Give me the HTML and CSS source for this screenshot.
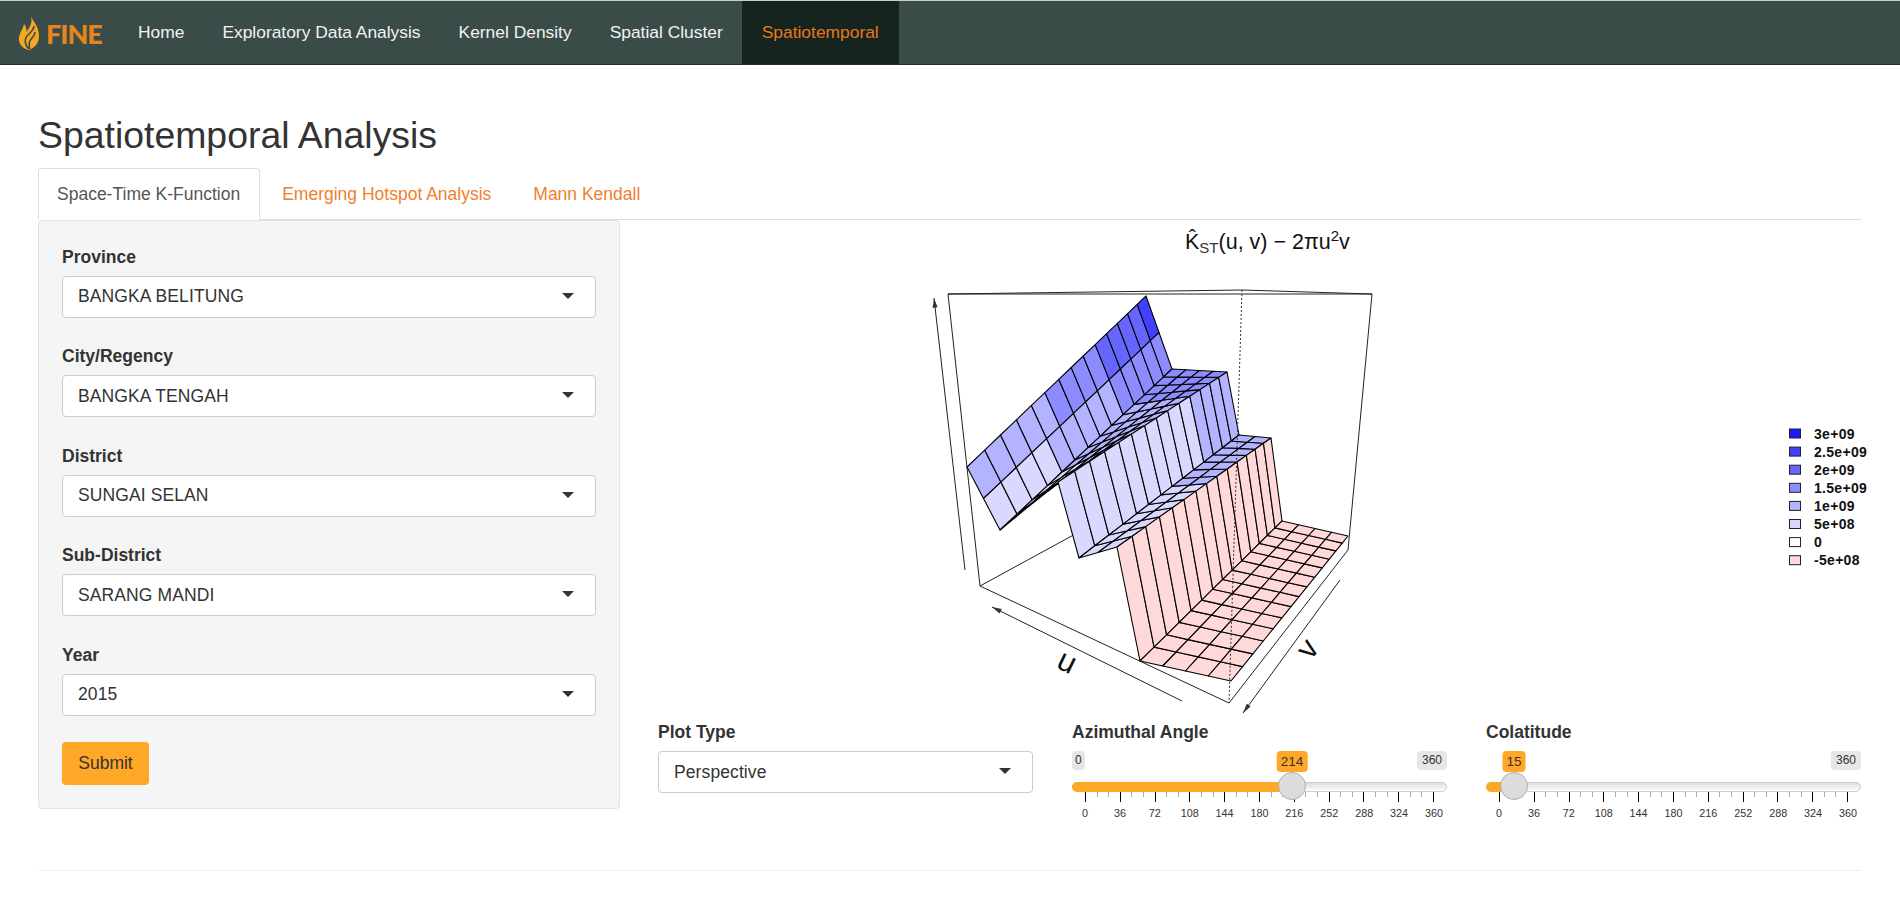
FILE: index.html
```html
<!DOCTYPE html>
<html lang="en">
<head>
<meta charset="UTF-8">
<meta name="viewport" content="width=device-width, initial-scale=1.0">
<title>FINE - Spatiotemporal Analysis</title>
<link rel="stylesheet" href="styles.css">
</head>
<body>
<nav class="navbar">
    <a class="brand" href="#">
        <svg class="brand-flame" viewBox="0 0 22 34" width="22" height="34">
            <path fill="#f5a623" d="M13 0C15 6 21 10 21 20C21 28 16 32 11 34C5 33 0 28 1 21C2 16 5 13 6 8C8 10 9 13 8 16C11 13 15 7 13 0Z"/>
            <path fill="none" stroke="#3a4c48" stroke-width="1.6" d="M11 33C6 28 6 22 11 18C14 15 16 13 16 10M12 33C10 28 11 25 14 22C16 20 17 18 17 16"/>
        </svg>
        <span class="brand-text">FINE</span>
    </a>
    <ul class="nav-links">
        <li><a href="#">Home</a></li>
        <li><a href="#">Exploratory Data Analysis</a></li>
        <li><a href="#">Kernel Density</a></li>
        <li><a href="#">Spatial Cluster</a></li>
        <li class="active"><a href="#">Spatiotemporal</a></li>
    </ul>
</nav>

<div class="container">
    <h1>Spatiotemporal Analysis</h1>
    <ul class="tabs">
        <li class="active"><a href="#">Space-Time K-Function</a></li>
        <li><a href="#">Emerging Hotspot Analysis</a></li>
        <li><a href="#">Mann Kendall</a></li>
    </ul>

    <div class="layout">
        <form class="sidebar">
            <div class="form-group">
                <label>Province</label>
                <div class="select">BANGKA BELITUNG</div>
            </div>
            <div class="form-group">
                <label>City/Regency</label>
                <div class="select">BANGKA TENGAH</div>
            </div>
            <div class="form-group">
                <label>District</label>
                <div class="select">SUNGAI SELAN</div>
            </div>
            <div class="form-group">
                <label>Sub-District</label>
                <div class="select">SARANG MANDI</div>
            </div>
            <div class="form-group">
                <label>Year</label>
                <div class="select">2015</div>
            </div>
            <button class="btn-submit" type="button">Submit</button>
        </form>

        <div class="main">
            <svg id="plot" class="plot" viewBox="658 220 1215 500" width="1215" height="500">
                <text class="plot-title" x="1185" y="249">K&#770;<tspan class="plot-sub" dy="4">ST</tspan><tspan dy="-4">(u, v) − 2πu</tspan><tspan class="plot-sup" dy="-8">2</tspan><tspan dy="8">v</tspan></text>
            </svg>

            <div class="controls">
                <div class="control">
                    <label>Plot Type</label>
                    <div class="select">Perspective</div>
                </div>

                <div class="control">
                    <label>Azimuthal Angle</label>
                    <div class="slider">
                        <div class="slider-limits"><span>0</span><span>360</span></div>
                        <span class="slider-value" style="left: 220px">214</span>
                        <div class="slider-track"><div class="slider-fill" style="width: 220px"></div></div>
                        <span class="slider-handle" style="left: 220px"></span>
                        <div class="slider-ticks"></div>
                        <div class="slider-scale">
                            <span>0</span><span>36</span><span>72</span><span>108</span><span>144</span><span>180</span><span>216</span><span>252</span><span>288</span><span>324</span><span>360</span>
                        </div>
                    </div>
                </div>

                <div class="control">
                    <label>Colatitude</label>
                    <div class="slider">
                        <div class="slider-limits"><span class="hidden">0</span><span>360</span></div>
                        <span class="slider-value" style="left: 28px">15</span>
                        <div class="slider-track"><div class="slider-fill" style="width: 28px"></div></div>
                        <span class="slider-handle" style="left: 28px"></span>
                        <div class="slider-ticks"></div>
                        <div class="slider-scale">
                            <span>0</span><span>36</span><span>72</span><span>108</span><span>144</span><span>180</span><span>216</span><span>252</span><span>288</span><span>324</span><span>360</span>
                        </div>
                    </div>
                </div>
            </div>
        </div>
    </div>

    <hr class="footer-line">
</div>
<script src="plot.js"></script>
</body>
</html>
```

FILE: styles.css
```css
* {
    box-sizing: border-box;
}
body {
    font-family: "Liberation Sans", Arial, sans-serif;
    font-size: 17.5px;
    line-height: 25px;
    color: #333;
    background-color: #fff;
    margin: 0;
    padding: 0;
    overflow: hidden;
}
a {
    text-decoration: none;
}
ul {
    list-style: none;
    margin: 0;
    padding: 0;
}

/* top bar */
.navbar {
    display: flex;
    height: 65px;
    background-color: #3a4c48;
    border-top: 1px solid #ccc;
    border-bottom: 1px solid #22302d;
}
.brand {
    display: flex;
    align-items: center;
    gap: 6px;
    width: 119px;
    padding: 1px 0 0 18px;
}
.brand-flame {
    flex: none;
}
.brand-text {
    font-family: Lato, sans-serif;
    font-weight: 900;
    font-size: 27px;
    letter-spacing: -1px;
    color: #e8841c;
}
.nav-links {
    display: flex;
}
.nav-links a {
    display: block;
    padding: 19px 19px 0;
    height: 63px;
    color: #f2f2f2;
    font-size: 17.4px;
}
.nav-links .active a {
    padding: 19px 20px 0;
    background-color: #16241f;
    color: #e8771a;
}

/* page */
.container {
    padding: 0 39px 0 38px;
}
h1 {
    font-size: 37.4px;
    font-weight: 400;
    line-height: 44px;
    margin: 48px 0 11px;
}
.tabs {
    display: flex;
    height: 52px;
    border-bottom: 1px solid #ddd;
}
.tabs a {
    display: block;
    height: 52px;
    padding: 13px 19px 0 18px;
    margin-right: 3px;
    color: #f07f2e;
    border: 1px solid transparent;
    border-radius: 4px 4px 0 0;
}
.tabs .active a {
    color: #555;
    background-color: #fff;
    border-color: #ddd #ddd transparent;
}
.layout {
    display: flex;
    align-items: flex-start;
}

/* sidebar */
.sidebar {
    flex: none;
    width: 582px;
    padding: 23.5px 23px 23px;
    background-color: #f5f5f5;
    border: 1px solid #e3e3e3;
    border-radius: 4px;
}
label {
    display: block;
    font-weight: 700;
    margin-bottom: 6px;
}
.form-group {
    margin-bottom: 26.5px;
}
.select {
    position: relative;
    height: 42px;
    padding: 7.5px 15px;
    background-color: #fff;
    border: 1px solid #ccc;
    border-radius: 4px;
    letter-spacing: 0.1px;
}
.select::after {
    content: "";
    position: absolute;
    top: 16px;
    right: 21px;
    border-style: solid;
    border-width: 6px 6px 0;
    border-color: #333 transparent transparent;
}
.btn-submit {
    display: block;
    width: 87px;
    height: 43px;
    padding: 0;
    font: inherit;
    color: #333;
    background-color: #ffa726;
    border: none;
    border-radius: 4px;
}

/* plot and its controls */
.main {
    flex: 1;
    margin-left: 38px;
}
.plot {
    display: block;
    overflow: visible;
}
.plot text {
    font-family: "Liberation Sans", Arial, sans-serif;
    fill: #111;
}
.plot .plot-title {
    font-size: 21.5px;
}
.plot .plot-sub {
    font-size: 15px;
    fill: #333;
}
.plot .plot-sup {
    font-size: 15px;
}
.plot .axis-label {
    font-size: 31px;
}
.plot .legend-label {
    font-size: 14px;
    font-weight: 700;
    letter-spacing: 0.3px;
}
.controls {
    display: grid;
    grid-template-columns: repeat(3, 375px);
    column-gap: 39px;
}

/* ion range slider look */
.slider {
    position: relative;
    height: 70px;
    font-size: 12px;
}
.slider-limits {
    display: flex;
    justify-content: space-between;
    height: 19px;
}
.slider-limits span {
    padding: 0 5px;
    line-height: 19px;
    background-color: #e6e6e6;
    border-radius: 4px;
}
.slider-limits span:first-child {
    padding: 0 3px;
}
.slider-limits .hidden {
    visibility: hidden;
}
.slider-value {
    position: absolute;
    top: 0;
    padding: 0 4px;
    line-height: 21px;
    font-size: 13.5px;
    background-color: #ffa726;
    border-radius: 4px;
    transform: translateX(-50%);
}
.slider-track {
    height: 10px;
    margin-top: 12px;
    background: linear-gradient(to bottom, #ddd, #fff);
    border: 1px solid #ccc;
    border-radius: 5px;
}
.slider-fill {
    height: 10px;
    margin: -1px;
    background-color: #ffa726;
    border-radius: 5px 0 0 5px;
}
.slider-handle {
    position: absolute;
    top: 21px;
    width: 28px;
    height: 28px;
    margin-left: -14px;
    background-color: #dcdcdc;
    border: 1px solid #b0b0b0;
    border-radius: 50%;
}
.slider-ticks {
    width: 349px;
    height: 10px;
    margin-left: 13px;
    background-image:
        repeating-linear-gradient(to right, #000 0 1px, transparent 1px 34.8px),
        repeating-linear-gradient(to right, #aaa 0 1px, transparent 1px 11.6px);
    background-size: 100% 10px, 100% 5px;
    background-repeat: no-repeat;
}
.slider-scale {
    display: flex;
    justify-content: space-between;
    width: 349px;
    margin: 4px 0 0 13px;
    font-size: 10.8px;
    line-height: 14px;
}
.slider-scale span {
    display: flex;
    justify-content: center;
    width: 0;
    white-space: nowrap;
}

.footer-line {
    margin: 49px 0 0;
    border: 0;
    border-top: 1px solid #eee;
}
```

FILE: plot.js
```js
// draws the perspective surface, box, axes and legend in the plot svg
const svg = document.getElementById('plot');
const NS = 'http://www.w3.org/2000/svg';

const BLUE1 = '#4040ff', BLUE2 = '#6666ff', BLUE3 = '#8c8cff', BLUE4 = '#b3b3ff', BLUE5 = '#d9d9ff', PINK = '#ffd9d9';

// spacing of the grid lines along u, the far side is squeezed by the perspective
const steps = [0, .099, .187, .276, .360, .435, .513, .582, .649, .716, .780, .840, .897, .951, 1];

function add(tag, attrs, text) {
    const el = document.createElementNS(NS, tag);
    for (const key in attrs) el.setAttribute(key, attrs[key]);
    if (text) el.textContent = text;
    svg.appendChild(el);
    return el;
}

// a, b = near edge, d, c = far edge; rows across, steps along
function point(a, b, c, d, s, t) {
    const x0 = a[0] + (d[0] - a[0]) * s, y0 = a[1] + (d[1] - a[1]) * s;
    const x1 = b[0] + (c[0] - b[0]) * s, y1 = b[1] + (c[1] - b[1]) * s;
    return [(x0 + (x1 - x0) * t).toFixed(1), (y0 + (y1 - y0) * t).toFixed(1)].join(',');
}

function patch(a, b, c, d, rows, color) {
    for (let i = 0; i < 14; i++) {
        for (let r = 0; r < rows; r++) {
            const pts = [
                point(a, b, c, d, steps[i], r / rows),
                point(a, b, c, d, steps[i + 1], r / rows),
                point(a, b, c, d, steps[i + 1], (r + 1) / rows),
                point(a, b, c, d, steps[i], (r + 1) / rows)
            ];
            add('polygon', { points: pts.join(' '), fill: color(i, r), stroke: '#000', 'stroke-width': 1.1, 'stroke-linejoin': 'round' });
        }
    }
}

function line(x1, y1, x2, y2, extra) {
    add('line', Object.assign({ x1, y1, x2, y2, stroke: '#222', 'stroke-width': 1 }, extra));
}

function arrow(x1, y1, x2, y2) {
    line(x1, y1, x2, y2);
    const angle = Math.atan2(y2 - y1, x2 - x1);
    const tip = (da) => (x2 - 10 * Math.cos(angle + da)).toFixed(1) + ',' + (y2 - 10 * Math.sin(angle + da)).toFixed(1);
    add('polygon', { points: x2 + ',' + y2 + ' ' + tip(.25) + ' ' + tip(-.25), fill: '#333' });
}

// box behind the surface
line(948, 294, 1372, 294);
line(948, 294, 1242, 290);
line(1242, 290, 1372, 294);
line(948, 294, 980, 586);
line(1372, 294, 1348, 550);
line(980, 586, 1229, 703);
line(1229, 703, 1348, 550);
line(980, 586, 1079, 532);

// upper sheet
patch([967, 467], [1000, 530], [1172, 369], [1146, 296], 2, (i, r) => {
    if (r === 0) return i < 5 ? BLUE4 : i < 9 ? BLUE3 : i < 13 ? BLUE2 : BLUE1;
    return i < 4 ? BLUE5 : i < 9 ? BLUE4 : BLUE3;
});
// upper step, edge on at the near end
patch([1000, 530], [1058, 482], [1227, 372], [1172, 369], 4, (i) => (i < 4 ? BLUE5 : i < 10 ? BLUE4 : BLUE3));
// middle wall
patch([1058, 482], [1079, 558], [1239, 435], [1227, 372], 1, (i) => (i < 10 ? BLUE5 : BLUE4));
// lower step
patch([1079, 558], [1117, 547], [1271, 438], [1239, 435], 2, (i) => (i < 7 ? BLUE5 : BLUE4));
// pink wall
patch([1117, 547], [1140, 661], [1282, 521], [1271, 438], 1, () => PINK);
// floor
patch([1140, 661], [1231, 681], [1348, 536], [1282, 521], 4, () => PINK);

// hidden corner of the box shows through as dots
line(1242, 290, 1229, 703, { 'stroke-dasharray': '2 2', stroke: '#333' });

// axes
arrow(965, 570, 934, 298);
arrow(1182, 701, 992, 607);
arrow(1340, 580, 1243, 713);
add('text', { class: 'axis-label', transform: 'translate(1055 667) rotate(26)' }, 'u');
add('text', { class: 'axis-label', transform: 'translate(1311 661) rotate(-54)' }, 'v');

// legend
const legend = [
    ['3e+09', '#1a1aff'], ['2.5e+09', BLUE1], ['2e+09', BLUE2], ['1.5e+09', BLUE3],
    ['1e+09', BLUE4], ['5e+08', BLUE5], ['0', '#fff'], ['-5e+08', PINK]
];
legend.forEach(function(item, i) {
    const y = 433.5 + i * 18.1;
    add('rect', { x: 1789.5, y: y - 4.5, width: 11, height: 9, fill: item[1], stroke: '#222' });
    add('text', { class: 'legend-label', x: 1814, y: y + 5 }, item[0]);
});
```
